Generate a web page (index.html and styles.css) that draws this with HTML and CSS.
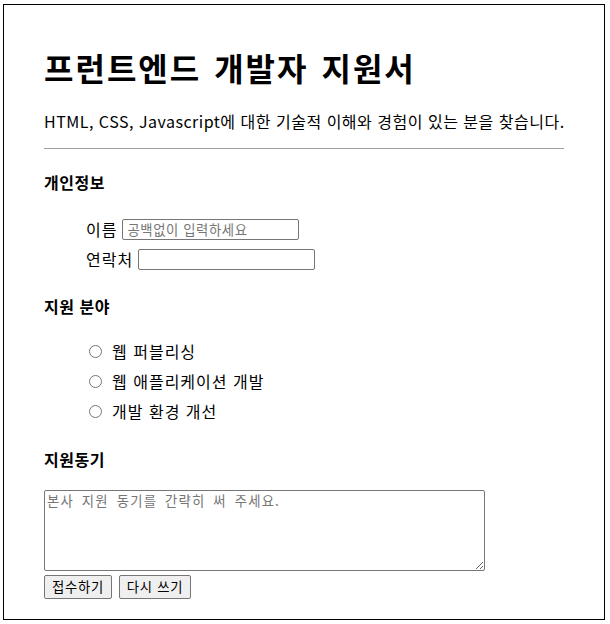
FILE: index.html
```html
<!DOCTYPE html>
<html lang="ko">
<head>
<meta charset="utf-8">
<title>프런트엔드 개발자 지원서</title>
<link rel="stylesheet" href="styles.css">
</head>
<body>
<div class="page">
  <h1 class="title">프런트엔드 개발자 지원서</h1>
  <p class="intro">HTML, CSS, Javascript에 대한 기술적 이해와 경험이 있는 분을 찾습니다.</p>
  <hr class="rule">
  <form class="form">
    <section class="section">
      <h2 class="section-title">개인정보</h2>
      <div class="fields">
        <div class="field"><label class="field-label" for="name">이름</label><input class="text-input" id="name" type="text" placeholder="공백없이 입력하세요"></div>
        <div class="field"><label class="field-label" for="phone">연락처</label><input class="text-input" id="phone" type="text"></div>
      </div>
    </section>
    <section class="section">
      <h2 class="section-title section-title-gap">지원 분야</h2>
      <div class="options">
        <label class="option"><input class="radio" type="radio" name="area"><span>웹 퍼블리싱</span></label>
        <label class="option"><input class="radio" type="radio" name="area"><span>웹 애플리케이션 개발</span></label>
        <label class="option"><input class="radio" type="radio" name="area"><span>개발 환경 개선</span></label>
      </div>
    </section>
    <section class="section">
      <h2 class="section-title section-title-gap2">지원동기</h2>
      <textarea class="motive" placeholder="본사 지원 동기를 간략히 써 주세요."></textarea>
      <div class="actions">
        <button class="btn" type="submit">접수하기</button>
        <button class="btn" type="reset">다시 쓰기</button>
      </div>
    </section>
  </form>
</div>
</body>
</html>
```

FILE: styles.css
```css
* { box-sizing: border-box; }
html, body { margin: 0; padding: 0; background: #fff; }
body {
  font-family: "Noto Sans CJK KR", "Noto Sans", sans-serif;
  color: #000;
}
.page {
  margin: 4px 5px 4px 3px;
  border: 1px solid #000;
  padding: 0 40px 20px 40px;
  display: flex;
  flex-direction: column;
}
.title {
  margin: 42px 0 0 0;
  font-size: 32px;
  line-height: 40px;
  font-weight: 700;
  letter-spacing: 2px;
  word-spacing: 2px;
}
.intro {
  margin: 22px 0 0 0;
  font-size: 16px;
  line-height: 24px;
  letter-spacing: 0.5px;
  white-space: nowrap;
}
.rule {
  margin: 15px 0 0 0;
  border: none;
  border-top: 1px solid #a0a0a0;
  height: 0;
}
.form { display: flex; flex-direction: column; }
.section { display: flex; flex-direction: column; }
.section-title {
  margin: 21px 0 0 0;
  font-size: 16px;
  line-height: 24px;
  font-weight: 700;
  letter-spacing: 0.5px;
}
.section-title-gap { margin-top: 24px; }
.section-title-gap2 { margin-top: 21px; }
.fields {
  display: flex;
  flex-direction: column;
  gap: 9px;
  margin-top: 25px;
  padding-left: 42px;
}
.field {
  display: flex;
  align-items: center;
  gap: 5px;
  height: 21px;
}
.field-label { font-size: 16px; line-height: 21px; letter-spacing: 1px; }
.text-input {
  width: 177px;
  height: 21px;
  border: 1px solid #767676;
  border-radius: 2px;
  padding: 0 4px;
  font-family: "Noto Sans CJK KR", sans-serif;
  font-size: 13.33px;
  line-height: 19px;
  letter-spacing: 0.6px;
  color: #000;
  background: #fff;
}
.text-input::placeholder { color: #757575; }
.options {
  display: flex;
  flex-direction: column;
  margin-top: 18px;
  padding-left: 45px;
}
.option {
  display: flex;
  align-items: center;
  gap: 10px;
  height: 30px;
  font-size: 16px;
  letter-spacing: 1px;
}
.radio {
  appearance: none;
  -webkit-appearance: none;
  margin: 0;
  width: 13px;
  height: 13px;
  border: 1px solid #767676;
  border-radius: 50%;
  background: #fff;
  flex: none;
}
.motive {
  margin-top: 19px;
  width: 441px;
  height: 81px;
  border: 1px solid #767676;
  border-radius: 2px;
  padding: 2px;
  font-family: "Noto Sans CJK KR", monospace;
  font-size: 13.33px;
  line-height: 16px;
  letter-spacing: 1.2px;
  word-spacing: 3px;
  resize: both;
}
.motive::placeholder { color: #757575; }
.actions {
  display: flex;
  gap: 7px;
  margin-top: 4px;
}
.btn {
  height: 24px;
  padding: 0 7px;
  background: #efefef;
  border: 1px solid #767676;
  border-radius: 2px;
  font-family: "Noto Sans CJK KR", sans-serif;
  font-size: 13.33px;
  line-height: 20px;
  letter-spacing: 0.7px;
  color: #000;
}
```
